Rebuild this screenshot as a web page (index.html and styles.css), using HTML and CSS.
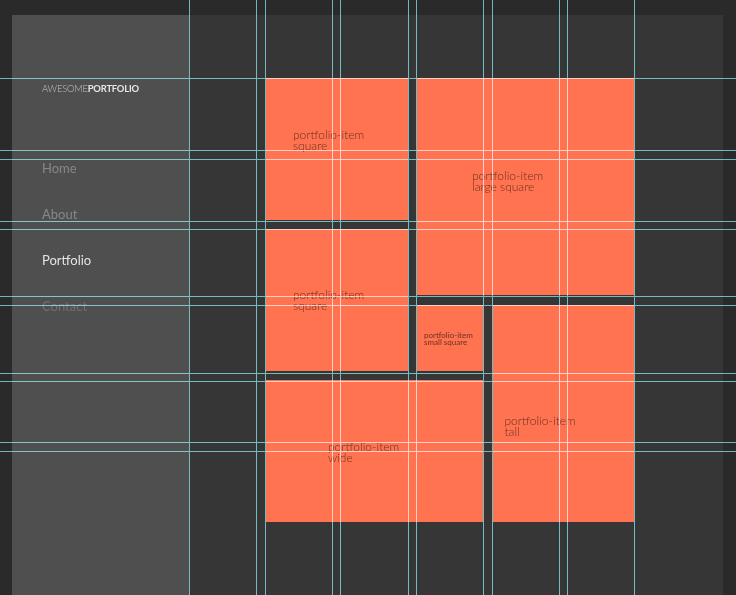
FILE: index.html
```html
<!DOCTYPE html>
<html lang="en">
<head>
    <meta charset="UTF-8">
    <meta name="viewport" content="width=device-width, initial-scale=1.0">
    <title>Awesome Portfolio - grid mockup</title>
    <link rel="stylesheet" href="styles.css">
</head>
<body>
    <div class="artboard">
        <aside class="sidebar">
            <div class="logo"><span class="logo-light">AWESOME</span><span class="logo-bold">PORTFOLIO</span></div>
            <nav class="menu">
                <a class="menu-link" href="#">Home</a>
                <a class="menu-link" href="#">About</a>
                <a class="menu-link active" href="#">Portfolio</a>
                <a class="menu-link dim" href="#">Contact</a>
            </nav>
        </aside>

        <main class="content">
            <div class="tiles">
                <div class="tile square-a"><span class="label">portfolio-item<br>square</span></div>
                <div class="tile large"><span class="label">portfolio-item<br>large square</span></div>
                <div class="tile square-b"><span class="label">portfolio-item<br>square</span></div>
                <div class="tile small"><span class="label">portfolio-item<br>small square</span></div>
                <div class="tile tall"><span class="label">portfolio-item<br>tall</span></div>
                <div class="tile wide"><span class="label">portfolio-item<br>wide</span></div>
            </div>
        </main>
    </div>

    <!-- Layout guides -->
    <svg class="guides" width="736" height="595" viewBox="0 0 736 595">
        <g class="guide-v">
            <line x1="189.5" y1="0" x2="189.5" y2="595"/>
            <line x1="256.5" y1="0" x2="256.5" y2="595"/>
            <line x1="265.5" y1="0" x2="265.5" y2="595"/>
            <line x1="332.5" y1="0" x2="332.5" y2="595"/>
            <line x1="340.5" y1="0" x2="340.5" y2="595"/>
            <line x1="408.5" y1="0" x2="408.5" y2="595"/>
            <line x1="416.5" y1="0" x2="416.5" y2="595"/>
            <line x1="483.5" y1="0" x2="483.5" y2="595"/>
            <line x1="492.5" y1="0" x2="492.5" y2="595"/>
            <line x1="559.5" y1="0" x2="559.5" y2="595"/>
            <line x1="567.5" y1="0" x2="567.5" y2="595"/>
            <line x1="634.5" y1="0" x2="634.5" y2="595"/>
        </g>
        <g class="guide-h">
            <line x1="0" y1="78.5" x2="736" y2="78.5"/>
            <line x1="0" y1="150.5" x2="736" y2="150.5"/>
            <line x1="0" y1="159.5" x2="736" y2="159.5"/>
            <line x1="0" y1="221.5" x2="736" y2="221.5"/>
            <line x1="0" y1="229.5" x2="736" y2="229.5"/>
            <line x1="0" y1="296.5" x2="736" y2="296.5"/>
            <line x1="0" y1="305.5" x2="736" y2="305.5"/>
            <line x1="0" y1="373.5" x2="736" y2="373.5"/>
            <line x1="0" y1="381.5" x2="736" y2="381.5"/>
            <line x1="0" y1="442.5" x2="736" y2="442.5"/>
            <line x1="0" y1="451.5" x2="736" y2="451.5"/>
        </g>
    </svg>
</body>
</html>
```

FILE: styles.css
```css
body {
    margin: 0;
    background: #2a2a2b;
    font-family: 'Lato', 'Liberation Sans', sans-serif;
    position: relative;
    height: 595px;
    overflow: hidden;
}

.artboard {
    margin: 15px 13px 0 12px;
    height: 580px;
    background: #363636;
    display: grid;
    grid-template-columns: 177px 1fr;
}

/* Sidebar */
.sidebar {
    background: #4f4f4f;
    padding: 68px 0 0 30px;
}

.logo {
    font-size: 9.4px;
    line-height: 12px;
    letter-spacing: -0.2px;
}

.logo-light {
    color: #c4c4c4;
    font-weight: 300;
}

.logo-bold {
    color: #e6e6e6;
    font-weight: 700;
}

.menu {
    margin-top: 50px;
    display: flex;
    flex-direction: column;
}

.menu-link {
    font-size: 13px;
    line-height: 46px;
    color: #878787;
    text-decoration: none;
}

.menu-link.active { color: #e4e4e4; }
.menu-link.dim { color: #707070; }

/* Portfolio grid */
.content {
    padding: 63px 0 0 77px;
}

.tiles {
    display: grid;
    grid-template-columns: 66px 66px 66px 66px 66px;
    grid-template-rows: repeat(6, 66px);
    column-gap: 9.5px;
    row-gap: 9.5px;
}

.tile {
    background: #ff7350;
}

.label {
    display: block;
    font-size: 12px;
    font-weight: 300;
    line-height: 11px;
    color: rgba(0, 0, 0, 0.6);
}

.square-a { grid-column: 1 / 3; grid-row: 1 / 3; padding: 51px 0 0 27px; }
.large    { grid-column: 3 / 6; grid-row: 1 / 4; padding: 92px 0 0 55px; }
.square-b { grid-column: 1 / 3; grid-row: 3 / 5; padding: 60px 0 0 27px; }
.small    { grid-column: 3 / 4; grid-row: 4 / 5; padding: 27px 0 0 7px; }
.tall     { grid-column: 4 / 6; grid-row: 4 / 7; padding: 110px 0 0 12px; }
.wide     { grid-column: 1 / 4; grid-row: 5 / 7; padding: 61px 0 0 62px; }

.small .label {
    font-size: 8px;
    font-weight: 400;
    line-height: 7.5px;
}

/* Guides overlay */
.guides {
    position: absolute;
    top: 0;
    left: 0;
    pointer-events: none;
    mix-blend-mode: screen;
}

.guides line {
    stroke: #50aaaf;
    stroke-width: 1;
}
```
